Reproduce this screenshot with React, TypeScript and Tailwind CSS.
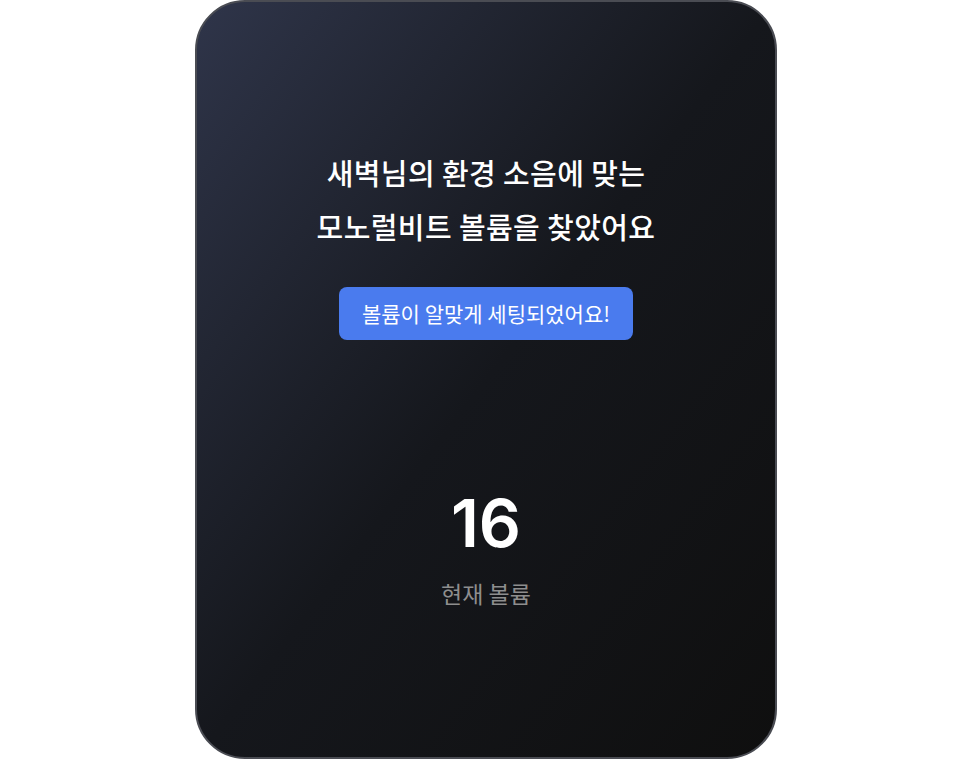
export default function App() {
  return (
    <div className="flex h-[759px] w-full items-start justify-center bg-white">
      <div
        className="flex h-[759px] w-[582px] flex-col items-center rounded-[50px] border-2 border-[#4a4c53] bg-gradient-to-br from-[#2f354a] via-[#15171c] via-50% to-[#0f0f0f] pt-[143px]"
        style={{ fontFamily: '"Noto Sans CJK KR", "Noto Sans", sans-serif' }}
      >
        <h1 className="text-center text-[29px] font-medium leading-[54px] tracking-[0.4px] text-white">
          새벽님의 환경 소음에 맞는
          <br />
          모노럴비트 볼륨을 찾았어요
        </h1>

        <div className="mt-[34px] flex h-[53px] w-[294px] items-center justify-center rounded-lg bg-[#4a7bee] text-[21px] font-normal text-white">
          볼륨이 알맞게 세팅되었어요!
        </div>

        <div
          className="mt-[150px] text-[66px] font-semibold leading-[66px] text-white"
          style={{ fontFamily: 'Inter, "Noto Sans", sans-serif' }}
        >
          16
        </div>
        <div className="mt-[22px] text-[23px] leading-[30px] text-[#8e8e8e]">현재 볼륨</div>
      </div>
    </div>
  );
}
